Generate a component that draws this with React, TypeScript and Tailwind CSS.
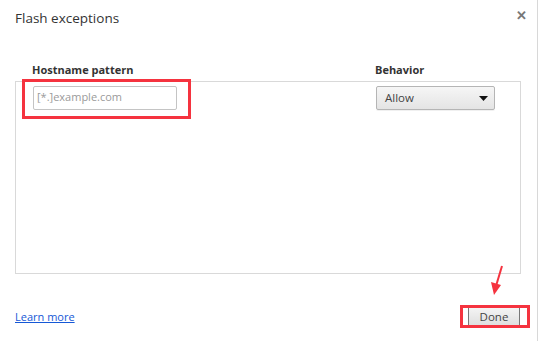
import React from "react";

export default function App() {
  return (
    <div
      className="relative w-[538px] h-[341px] bg-white border-r border-[#d8d8d8] text-[#333] flex flex-col"
      style={{ fontFamily: '"Open Sans", "Noto Sans", sans-serif' }}
    >
      {/* header */}
      <div className="flex items-start justify-between pl-[15px] pr-[10px] pt-[8px]">
        <h1 className="text-[13.5px] leading-[20px] font-normal text-[#333]">Flash exceptions</h1>
        <button className="text-[#777] text-[13px] leading-none mt-[1px] font-bold">✕</button>
      </div>

      {/* list */}
      <div className="px-[15px] mt-[34px]">
        <div className="flex text-[11px] font-bold leading-[16px] text-[#333] pb-[3px]">
          <div className="pl-[17px] w-[360px]">Hostname pattern</div>
          <div>Behavior</div>
        </div>
        <div className="w-[506px] h-[193px] border border-[#d9d9d9] pt-[3px]">
          <div className="flex items-center">
            <div className="ml-[17px] w-[144px] h-[24px] border border-[#c4c4c4] rounded-[2px] flex items-center pl-[3px] text-[11px] text-[#9a9a9a]">
              [*.]example.com
            </div>
            <div className="ml-[199px] mt-[1px] w-[119px] h-[24px] border border-[#b5b5b5] rounded-[2px] bg-gradient-to-b from-[#f6f6f6] to-[#e4e4e4] flex items-center justify-between pl-[8px] pr-[6px] text-[11.5px] text-[#444] shadow-[0_1px_0_rgba(0,0,0,0.06)]">
              <span>Allow</span>
              <svg width="9" height="5" viewBox="0 0 9 5">
                <path d="M0 0 H9 L4.5 5 Z" fill="#111" />
              </svg>
            </div>
          </div>
        </div>
      </div>

      {/* footer */}
      <div className="mt-auto mb-[14px] pl-[15px] pr-[17px] flex items-center justify-between">
        <a className="text-[11px] text-[#1558d6] underline leading-[16px] cursor-pointer">Learn more</a>
        <button className="w-[52px] h-[20px] border border-[#a8a8a8] border-l-[#777] border-r-[#777] rounded-[1px] bg-gradient-to-b from-[#f4f4f4] to-[#dedede] text-[11.5px] text-[#444] leading-none">
          Done
        </button>
      </div>

      {/* annotations */}
      <div className="absolute left-[22px] top-[79px] w-[169px] h-[40px] border-[3px] border-[#f5333f]" />
      <div className="absolute left-[460px] top-[305px] w-[70px] h-[23px] border-[3px] border-[#f5333f]" />
      <svg className="absolute left-[488px] top-[264px]" width="18" height="34" viewBox="0 0 18 34">
        <path d="M14 2 L8 22" stroke="#f5333f" strokeWidth="2" fill="none" />
        <path d="M3 18 L13 21 L6 31 Z" fill="#f5333f" />
      </svg>
    </div>
  );
}
